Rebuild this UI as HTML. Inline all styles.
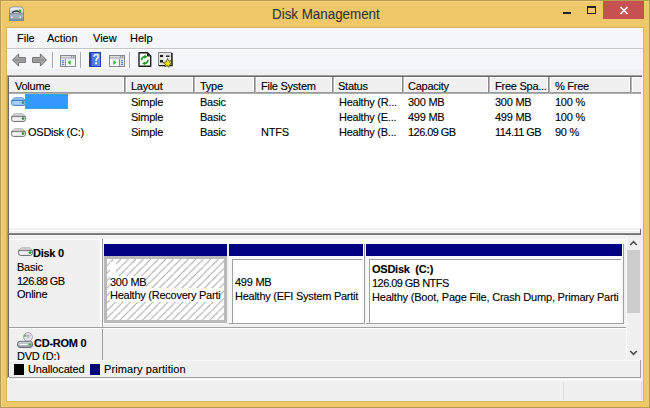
<!DOCTYPE html>
<html><head><meta charset="utf-8">
<style>
*{margin:0;padding:0;box-sizing:border-box}
html,body{width:650px;height:408px;overflow:hidden;background:#EFC86A}
body{position:relative;font-family:"Liberation Sans",sans-serif;font-size:11px;color:#000}
.a{position:absolute}
.t{position:absolute;white-space:nowrap;line-height:15px;font-size:11px;-webkit-text-stroke:0.12px #000;letter-spacing:-0.25px}
.b{font-weight:bold}
svg{position:absolute;overflow:visible}
</style></head><body>
<!-- outer frame -->
<div class="a" style="left:0;top:0;width:650px;height:408px;border:1px solid #B79B55"></div>
<div class="a" style="left:1px;top:1px;width:648px;height:406px;border:1px solid #F5D27C;border-right-color:#F0C96C;border-bottom-color:#F0C96C"></div>
<!-- title icon -->
<svg style="left:9px;top:6px" width="15" height="15" viewBox="0 0 15 15">
<defs><linearGradient id="tg" x1="0" y1="0" x2="0" y2="1"><stop offset="0" stop-color="#F4F6F8"/><stop offset="1" stop-color="#C2C8D0"/></linearGradient>
<linearGradient id="tb" x1="0" y1="0" x2="0" y2="1"><stop offset="0" stop-color="#B4C0CA"/><stop offset="1" stop-color="#7E8E9C"/></linearGradient></defs>
<path d="M0.5 8 V4 Q0.5 0.8 4 0.8 H11 Q14.5 0.8 14.5 4 V8 Z" fill="url(#tg)" stroke="#8C949C"/>
<path d="M3 6.5 Q7.5 3.5 11.5 6.5" stroke="#2A2A2A" stroke-width="1.3" fill="none"/>
<rect x="10" y="3.5" width="2.2" height="2.6" fill="#36B236"/>
<rect x="0.5" y="7.8" width="14" height="6.7" fill="url(#tb)" stroke="#7A8894"/>
<rect x="2" y="10.5" width="1.6" height="1.6" fill="#F0F0F0"/><rect x="10.5" y="10.5" width="1.6" height="1.6" fill="#F0F0F0"/>
<rect x="4" y="11" width="6" height="1" fill="#A8B4BE"/>
</svg>
<div class="a" style="left:271.5px;top:3.7px;font-size:14px;line-height:20px;color:#333;white-space:nowrap;-webkit-text-stroke:0.1px #333;transform:scaleX(0.955);transform-origin:0 0">Disk Management</div>
<!-- caption buttons -->
<div class="a" style="left:563px;top:12px;width:8px;height:2px;background:#222"></div>
<div class="a" style="left:587px;top:6px;width:9px;height:8px;border:1px solid #222;border-top-width:2px"></div>
<div class="a" style="left:603px;top:1px;width:41px;height:18px;background:#C75050"></div>
<svg style="left:619px;top:6px" width="10" height="9" viewBox="0 0 10 9"><path d="M1.5 1 L8.5 8 M8.5 1 L1.5 8" stroke="#fff" stroke-width="1.6"/></svg>
<!-- client border -->
<div class="a" style="left:6px;top:27px;width:638px;height:375px;border:1px solid #D9B45E"></div>
<!-- client bg -->
<div class="a" style="left:7px;top:28px;width:636px;height:373px;background:#F0F0F0"></div>
<!-- menubar -->
<div class="a" style="left:7px;top:28px;width:636px;height:20px;background:#F5F6F7"></div>
<div class="t" style="left:17px;top:31px;letter-spacing:0">File</div>
<div class="t" style="left:47px;top:31px;letter-spacing:0">Action</div>
<div class="t" style="left:93px;top:31px;letter-spacing:0">View</div>
<div class="t" style="left:130px;top:31px;letter-spacing:0">Help</div>
<div class="a" style="left:7px;top:48px;width:636px;height:1px;background:#C6C6C6"></div>
<div class="a" style="left:7px;top:49px;width:636px;height:1px;background:#FFFFFF"></div>
<!-- toolbar -->
<div class="a" style="left:7px;top:50px;width:636px;height:19px;background:#F5F6F7"></div>
<!-- back arrow -->
<svg style="left:12px;top:53px" width="15" height="15" viewBox="0 0 15 15">
<defs><linearGradient id="ag" x1="0" y1="0" x2="0" y2="1"><stop offset="0" stop-color="#C4C4C4"/><stop offset="0.5" stop-color="#8E8E8E"/><stop offset="1" stop-color="#B8B8B8"/></linearGradient></defs>
<path d="M0.6 7 L6.6 0.9 V4.6 H13.4 V9.4 H6.6 V13.1 Z" fill="url(#ag)" stroke="#6E6E6E" stroke-linejoin="round"/>
<path d="M2.2 7 L5.6 3.5 V5.6 H12.4 V8.4 H5.6 V10.5 Z" fill="none" stroke="#C8C8C8" stroke-width="0.6" opacity="0.7"/>
</svg>
<svg style="left:32px;top:53px" width="15" height="15" viewBox="0 0 15 15">
<path d="M14.4 7 L8.4 0.9 V4.6 H0.6 V9.4 H8.4 V13.1 Z" fill="url(#ag)" stroke="#6E6E6E" stroke-linejoin="round"/>
<path d="M12.8 7 L9.4 3.5 V5.6 H1.6 V8.4 H9.4 V10.5 Z" fill="none" stroke="#C8C8C8" stroke-width="0.6" opacity="0.7"/>
</svg>
<div class="a" style="left:52px;top:52px;width:1px;height:16px;background:#A8A8A8"></div>
<div class="a" style="left:53px;top:52px;width:1px;height:16px;background:#FFFFFF"></div>
<!-- console tree icon -->
<svg style="left:60px;top:55px" width="16" height="12" viewBox="0 0 16 12">
<rect x="0.5" y="0.5" width="15" height="11" fill="#FAFAFA" stroke="#868B92"/>
<rect x="1" y="1" width="14" height="1.6" fill="#D9DDE2"/>
<rect x="11" y="1.2" width="1.2" height="1.2" fill="#868B92"/><rect x="13" y="1.2" width="1.2" height="1.2" fill="#868B92"/>
<rect x="1" y="2.6" width="14" height="1" fill="#868B92"/>
<rect x="1" y="3.6" width="14" height="0.9" fill="#DCDFE3"/>
<rect x="1" y="4.5" width="4" height="6.5" fill="#E9EDF2"/>
<rect x="5" y="4.2" width="1" height="7" fill="#868B92"/>
<ellipse cx="3" cy="5.7" rx="1.3" ry="0.7" fill="#4F86D6"/><ellipse cx="3" cy="7.6" rx="1.3" ry="0.7" fill="#4F86D6"/><ellipse cx="3" cy="9.5" rx="1.3" ry="0.7" fill="#4F86D6"/>
<path d="M10.6 5 L7.6 7.5 L10.6 10 Z" fill="#2DB52D"/>
</svg>
<div class="a" style="left:80px;top:52px;width:1px;height:16px;background:#A8A8A8"></div>
<div class="a" style="left:81px;top:52px;width:1px;height:16px;background:#FFFFFF"></div>
<!-- help icon -->
<svg style="left:89px;top:52px" width="12" height="15" viewBox="0 0 12 15">
<defs><linearGradient id="hg" x1="0" y1="0" x2="1" y2="0"><stop offset="0" stop-color="#3F63D0"/><stop offset="1" stop-color="#7196E6"/></linearGradient></defs>
<rect x="0" y="0" width="12" height="15" fill="url(#hg)"/>
<rect x="0" y="0" width="2.5" height="15" fill="#1F37A8"/>
<rect x="0.5" y="0.5" width="11" height="14" fill="none" stroke="#2540B0"/>
<path d="M5.1 4.7 Q5.2 2.6 7.3 2.6 Q9.3 2.6 9.3 4.6 Q9.3 5.9 7.8 6.9 Q7.1 7.4 7.1 8.9" stroke="#fff" stroke-width="1.5" fill="none"/>
<rect x="6.2" y="10.3" width="1.8" height="1.9" fill="#fff"/>
<rect x="2.5" y="1" width="0.8" height="13" fill="#5E80D8" opacity="0.6"/>
</svg>
<!-- action pane icon -->
<svg style="left:109px;top:55px" width="16" height="12" viewBox="0 0 16 12">
<rect x="0.5" y="0.5" width="15" height="11" fill="#FAFAFA" stroke="#868B92"/>
<rect x="1" y="1" width="14" height="1.6" fill="#D9DDE2"/>
<rect x="11" y="1.2" width="1.2" height="1.2" fill="#868B92"/><rect x="13" y="1.2" width="1.2" height="1.2" fill="#868B92"/>
<rect x="1" y="2.6" width="14" height="1" fill="#868B92"/>
<rect x="1" y="3.6" width="14" height="0.9" fill="#DCDFE3"/>
<rect x="11" y="4.5" width="4" height="6.5" fill="#E9EDF2"/>
<rect x="10" y="4.2" width="1" height="7" fill="#868B92"/>
<ellipse cx="13" cy="5.7" rx="1.3" ry="0.7" fill="#4F86D6"/><ellipse cx="13" cy="7.6" rx="1.3" ry="0.7" fill="#4F86D6"/><ellipse cx="13" cy="9.5" rx="1.3" ry="0.7" fill="#4F86D6"/>
<path d="M4.4 5 L7.4 7.5 L4.4 10 Z" fill="#2DB52D"/>
</svg>
<div class="a" style="left:129px;top:52px;width:1px;height:16px;background:#A8A8A8"></div>
<div class="a" style="left:130px;top:52px;width:1px;height:16px;background:#FFFFFF"></div>
<!-- refresh icon -->
<svg style="left:137.5px;top:52px" width="14" height="16" viewBox="0 0 14 16">
<path d="M1 0.8 H9.5 L12.7 4 V14.2 H1 Z" fill="#FFFFFF" stroke="#1E1E1E" stroke-width="1.4" stroke-linejoin="round"/>
<path d="M9.5 1 V4 H12.5" fill="#333" stroke="#1E1E1E" stroke-width="1"/>
<path d="M3.6 8.2 Q3.6 5 7 4.6" stroke="#1F9A1F" stroke-width="1.6" fill="none"/>
<path d="M6.4 2.8 L9.6 4.8 L6.4 6.8 Z" fill="#1F9A1F"/>
<path d="M10 7.8 Q10 11 6.6 11.4" stroke="#1F9A1F" stroke-width="1.6" fill="none"/>
<path d="M7.2 9.4 L4 11.4 L7.2 13.2 Z" fill="#1F9A1F"/>
</svg>
<!-- properties icon -->
<svg style="left:158px;top:52px" width="16" height="16" viewBox="0 0 16 16">
<rect x="0.5" y="0.5" width="13" height="13" fill="#E4E4E4" stroke="#8A8A8A"/>
<path d="M1 13.6 H14 V1" stroke="#1A1A1A" stroke-width="1.4" fill="none"/>
<rect x="2" y="3" width="3" height="2" fill="#1A1A1A"/><rect x="8" y="3.5" width="3.5" height="1.4" fill="#1A1A1A"/>
<rect x="2" y="8" width="3" height="2.5" fill="#1A1A1A"/>
<rect x="6" y="5.5" width="5" height="2" fill="#FFFFFF"/>
<path d="M9.5 6.2 L10.6 9 L13.6 8.4 L11.8 10.8 L14.4 12.8 L11.4 12.8 L10.8 15.4 L9.2 13.4 L6.8 15 L7.4 12.2 L5 10.6 L8.2 10 Z" fill="#E6E21A" stroke="#4A4A00" stroke-width="0.7"/>
</svg>
<!-- list view -->
<div class="a" style="left:7px;top:75px;width:635px;height:1px;background:#A0A0A0"></div>
<div class="a" style="left:7px;top:75px;width:1px;height:159px;background:#A0A0A0"></div>
<div class="a" style="left:8px;top:76px;width:634px;height:1px;background:#696969"></div>
<div class="a" style="left:8px;top:76px;width:1px;height:157px;background:#696969"></div>
<div class="a" style="left:9px;top:77px;width:633px;height:151px;background:#FFFFFF"></div><div class="a" style="left:641px;top:77px;width:2px;height:151px;background:#F6F6F6"></div>
<!-- header -->
<div class="a" style="left:9px;top:78px;width:632px;height:14px;background:#F0F0F0"></div>
<div class="a" style="left:9px;top:92px;width:632px;height:1px;background:#9A9A9A"></div><div class="a" style="left:9px;top:93px;width:632px;height:1px;background:#ACACAC"></div>
<div class="a" style="left:123px;top:78px;width:1px;height:14px;background:#fff"></div><div class="a" style="left:124px;top:77px;width:1px;height:16px;background:#8A8A8A"></div><div class="a" style="left:125px;top:77px;width:1px;height:16px;background:#B4B4B4"></div><div class="a" style="left:126px;top:78px;width:1px;height:14px;background:#fff"></div>
<div class="a" style="left:192px;top:78px;width:1px;height:14px;background:#fff"></div><div class="a" style="left:193px;top:77px;width:1px;height:16px;background:#8A8A8A"></div><div class="a" style="left:194px;top:77px;width:1px;height:16px;background:#B4B4B4"></div><div class="a" style="left:195px;top:78px;width:1px;height:14px;background:#fff"></div>
<div class="a" style="left:253px;top:78px;width:1px;height:14px;background:#fff"></div><div class="a" style="left:254px;top:77px;width:1px;height:16px;background:#8A8A8A"></div><div class="a" style="left:255px;top:77px;width:1px;height:16px;background:#B4B4B4"></div><div class="a" style="left:256px;top:78px;width:1px;height:14px;background:#fff"></div>
<div class="a" style="left:331px;top:78px;width:1px;height:14px;background:#fff"></div><div class="a" style="left:332px;top:77px;width:1px;height:16px;background:#8A8A8A"></div><div class="a" style="left:333px;top:77px;width:1px;height:16px;background:#B4B4B4"></div><div class="a" style="left:334px;top:78px;width:1px;height:14px;background:#fff"></div>
<div class="a" style="left:401px;top:78px;width:1px;height:14px;background:#fff"></div><div class="a" style="left:402px;top:77px;width:1px;height:16px;background:#8A8A8A"></div><div class="a" style="left:403px;top:77px;width:1px;height:16px;background:#B4B4B4"></div><div class="a" style="left:404px;top:78px;width:1px;height:14px;background:#fff"></div>
<div class="a" style="left:487px;top:78px;width:1px;height:14px;background:#fff"></div><div class="a" style="left:488px;top:77px;width:1px;height:16px;background:#8A8A8A"></div><div class="a" style="left:489px;top:77px;width:1px;height:16px;background:#B4B4B4"></div><div class="a" style="left:490px;top:78px;width:1px;height:14px;background:#fff"></div>
<div class="a" style="left:547px;top:78px;width:1px;height:14px;background:#fff"></div><div class="a" style="left:548px;top:77px;width:1px;height:16px;background:#8A8A8A"></div><div class="a" style="left:549px;top:77px;width:1px;height:16px;background:#B4B4B4"></div><div class="a" style="left:550px;top:78px;width:1px;height:14px;background:#fff"></div>
<div class="a" style="left:629px;top:78px;width:1px;height:14px;background:#fff"></div><div class="a" style="left:630px;top:77px;width:1px;height:16px;background:#8A8A8A"></div><div class="a" style="left:631px;top:77px;width:1px;height:16px;background:#B4B4B4"></div><div class="a" style="left:632px;top:78px;width:1px;height:14px;background:#fff"></div>
<div class="t" style="left:15px;top:78.5px">Volume</div>
<div class="t" style="left:131px;top:78.5px">Layout</div>
<div class="t" style="left:200px;top:78.5px">Type</div>
<div class="t" style="left:261px;top:78.5px">File System</div>
<div class="t" style="left:338px;top:78.5px">Status</div>
<div class="t" style="left:408px;top:78.5px">Capacity</div>
<div class="t" style="left:495px;top:78.5px">Free Spa...</div>
<div class="t" style="left:555px;top:78.5px">% Free</div>
<!-- rows -->
<svg id="dk" style="left:11px;top:97px" width="15" height="10" viewBox="0 0 15 10">
<path d="M1 3.6 Q1.6 1 4 0.6 H11 Q13.4 1 14 3.6 Z" fill="#8FBDEB" stroke="#6FA2D8" stroke-width="0.8"/>
<path d="M0.7 3.4 H14.3 V6.6 Q14.3 8.4 12.4 8.4 H2.6 Q0.7 8.4 0.7 6.6 Z" fill="#A8CEF4" stroke="#3F78C0" stroke-width="1"/>
<circle cx="12" cy="5.6" r="1.35" fill="#2E8E6E"/>
</svg>
<div class="a" style="left:25px;top:94px;width:43px;height:15px;background:#3399FF;border:1px dotted #C38A3E"></div>
<svg style="left:11px;top:113px" width="15" height="10" viewBox="0 0 15 10">
<path d="M1 3.6 Q1.6 1 4 0.6 H11 Q13.4 1 14 3.6 Z" fill="#D2D2D2" stroke="#B4B4B4" stroke-width="0.8"/>
<path d="M0.7 3.4 H14.3 V6.6 Q14.3 8.4 12.4 8.4 H2.6 Q0.7 8.4 0.7 6.6 Z" fill="#F2F2F8" stroke="#6A6A6A" stroke-width="1"/>
<path d="M2 4.3 H11" stroke="#DCDCE8" stroke-width="0.8"/>
<circle cx="12" cy="5.6" r="1.35" fill="#17A017"/>
</svg>
<svg style="left:11px;top:128px" width="15" height="10" viewBox="0 0 15 10">
<path d="M1 3.6 Q1.6 1 4 0.6 H11 Q13.4 1 14 3.6 Z" fill="#D2D2D2" stroke="#B4B4B4" stroke-width="0.8"/>
<path d="M0.7 3.4 H14.3 V6.6 Q14.3 8.4 12.4 8.4 H2.6 Q0.7 8.4 0.7 6.6 Z" fill="#F2F2F8" stroke="#6A6A6A" stroke-width="1"/>
<path d="M2 4.3 H11" stroke="#DCDCE8" stroke-width="0.8"/>
<circle cx="12" cy="5.6" r="1.35" fill="#17A017"/>
</svg>
<div class="t" style="left:131px;top:94.5px">Simple</div>
<div class="t" style="left:200px;top:94.5px">Basic</div>
<div class="t" style="left:339px;top:94.5px">Healthy (R...</div>
<div class="t" style="left:408px;top:94.5px">300 MB</div>
<div class="t" style="left:495px;top:94.5px">300 MB</div>
<div class="t" style="left:555px;top:94.5px">100 %</div>

<div class="t" style="left:131px;top:109.7px">Simple</div>
<div class="t" style="left:200px;top:109.7px">Basic</div>
<div class="t" style="left:339px;top:109.7px">Healthy (E...</div>
<div class="t" style="left:408px;top:109.7px">499 MB</div>
<div class="t" style="left:495px;top:109.7px">499 MB</div>
<div class="t" style="left:555px;top:109.7px">100 %</div>

<div class="t" style="left:28px;top:125px">OSDisk (C:)</div>
<div class="t" style="left:131px;top:125px">Simple</div>
<div class="t" style="left:200px;top:125px">Basic</div>
<div class="t" style="left:261px;top:125px">NTFS</div>
<div class="t" style="left:339px;top:125px">Healthy (B...</div>
<div class="t" style="left:408px;top:125px;letter-spacing:-0.55px">126.09 GB</div>
<div class="t" style="left:495px;top:125px;letter-spacing:-0.55px">114.11 GB</div>
<div class="t" style="left:555px;top:125px">90 %</div>
<!-- splitter -->
<div class="a" style="left:9px;top:230px;width:631px;height:1px;background:#FFFFFF"></div>
<div class="a" style="left:7px;top:233px;width:634px;height:1px;background:#8A8A8A"></div>
<div class="a" style="left:7px;top:234px;width:634px;height:1px;background:#6E6E6E"></div>
<div class="a" style="left:640px;top:229px;width:1px;height:6px;background:#6E6E6E"></div>
<div class="a" style="left:9px;top:235px;width:616px;height:1px;background:#FAFAFA"></div>
<!-- lower pane -->
<div class="a" style="left:7px;top:234px;width:1px;height:144px;background:#A0A0A0"></div>
<div class="a" style="left:8px;top:234px;width:1px;height:143px;background:#696969"></div>
<!-- disk 0 row -->
<div class="a" style="left:9px;top:239px;width:92px;height:1px;background:#FFFFFF"></div>
<div class="a" style="left:100px;top:239px;width:2px;height:88px;background:#FFFFFF"></div>
<div class="a" style="left:102px;top:239px;width:1px;height:121px;background:#A0A0A0"></div>
<div class="a" style="left:103px;top:239px;width:522px;height:5px;background:#F8F8F8;border-top:1px solid #fff"></div>
<svg style="left:18px;top:247px" width="15" height="10" viewBox="0 0 15 10">
<path d="M1 3.6 Q1.6 1 4 0.6 H11 Q13.4 1 14 3.6 Z" fill="#D2D2D2" stroke="#B4B4B4" stroke-width="0.8"/>
<path d="M0.7 3.4 H14.3 V6.6 Q14.3 8.4 12.4 8.4 H2.6 Q0.7 8.4 0.7 6.6 Z" fill="#F2F2F8" stroke="#6A6A6A" stroke-width="1"/>
<path d="M2 4.3 H11" stroke="#DCDCE8" stroke-width="0.8"/>
<circle cx="12" cy="5.6" r="1.35" fill="#17A017"/>
</svg>
<div class="t b" style="left:33px;top:246px">Disk 0</div>
<div class="t" style="left:17px;top:259.7px">Basic</div>
<div class="t" style="left:17px;top:273.7px;letter-spacing:-0.55px">126.88 GB</div>
<div class="t" style="left:17px;top:287px">Online</div>
<!-- partition 1 (selected) -->
<div class="a" style="left:104px;top:244px;width:123px;height:12px;background:#000080"></div>
<div class="a" style="left:104px;top:256px;width:123px;height:67px;background:#B9B9B9"></div>
<svg style="left:107px;top:259px" width="117" height="61">
<defs><pattern id="h" patternUnits="userSpaceOnUse" width="7.5" height="7.5" x="6.5" y="0">
<path d="M-1 8.5 L8.5 -1" stroke="#A2A2A2" stroke-width="0.95"/>
</pattern></defs>
<rect width="117" height="61" fill="#fff"/>
<rect width="117" height="61" fill="url(#h)"/>
</svg>
<div class="a" style="left:107px;top:259px;width:117px;height:61px;overflow:hidden">
<div class="a" style="left:3px;top:3px;width:6px;height:14px;background:#fff"></div>
<div class="t" style="left:3px;top:17px;line-height:13px;background:#fff">300 MB</div>
<div class="t" style="left:3px;top:29px;line-height:14px;background:#fff">Healthy (Recovery Parti</div>
</div>
<div class="a" style="left:103px;top:323px;width:123px;height:1px;background:#FFFFFF"></div>
<!-- partition 2 -->
<div class="a" style="left:229px;top:244px;width:136px;height:80px;background:#F8F8F8;border-right:1px solid #A0A0A0;border-bottom:1px solid #A0A0A0"></div>
<div class="a" style="left:229px;top:244px;width:134px;height:12px;background:#000080"></div>
<div class="a" style="left:232px;top:259px;width:130px;height:64px;background:#FFFFFF;border-left:1px solid #A0A0A0;border-top:1px solid #A0A0A0;overflow:hidden">
<div class="t" style="left:2px;top:14.8px">499 MB</div>
<div class="t" style="left:2px;top:28.8px">Healthy (EFI System Partit</div>
</div>
<!-- partition 3 -->
<div class="a" style="left:366px;top:244px;width:258px;height:80px;background:#F8F8F8;border-right:1px solid #A0A0A0;border-bottom:1px solid #A0A0A0"></div>
<div class="a" style="left:366px;top:244px;width:256px;height:12px;background:#000080"></div>
<div class="a" style="left:369px;top:259px;width:252px;height:64px;background:#FFFFFF;border-left:1px solid #A0A0A0;border-top:1px solid #A0A0A0;overflow:hidden">
<div class="t b" style="left:2px;top:2px">OSDisk&nbsp; (C:)</div>
<div class="t" style="left:2px;top:15.8px;letter-spacing:-0.55px">126.09 GB NTFS</div>
<div class="t" style="left:2px;top:29.8px;letter-spacing:-0.2px">Healthy (Boot, Page File, Crash Dump, Primary Parti</div>
</div>
<!-- row separator -->
<div class="a" style="left:9px;top:327px;width:617px;height:1px;background:#A0A0A0"></div>
<div class="a" style="left:9px;top:328px;width:617px;height:1px;background:#FFFFFF"></div>
<!-- cd-rom row -->
<svg style="left:17px;top:332px" width="17" height="16" viewBox="0 0 17 16">
<defs><linearGradient id="cb" x1="0" y1="0" x2="0" y2="1"><stop offset="0" stop-color="#D6DADE"/><stop offset="1" stop-color="#8E9398"/></linearGradient></defs>
<circle cx="11" cy="5" r="4.4" fill="#ECE6F0" stroke="#A8A4B0"/>
<path d="M8 2.5 Q11 4 13.5 3" stroke="#C9A8D8" stroke-width="1.2" fill="none"/>
<circle cx="11" cy="5" r="1.1" fill="#fff" stroke="#9A9A9A" stroke-width="0.8"/>
<rect x="6.8" y="2.8" width="2" height="2" fill="#48C048"/>
<path d="M3 9.3 H13.5 Q15.5 9.3 15.5 11.8 V13 Q15.5 15.5 13 15.5 H3 Q0.5 15.5 0.5 13 V11.8 Q0.5 9.3 3 9.3 Z" fill="url(#cb)" stroke="#6E7276"/>
<rect x="2.5" y="12" width="8" height="1.2" fill="#F2F2F2"/>
<rect x="12.3" y="11.3" width="2" height="2.2" fill="#2BAA2B"/>
</svg>
<div class="t b" style="left:34px;top:335.8px">CD-ROM 0</div>
<div class="t" style="left:17px;top:349px">DVD (D:)</div>
<!-- scrollbar -->
<div class="a" style="left:626px;top:236px;width:1px;height:124px;background:#FAFAFA"></div>
<svg style="left:629px;top:240px" width="9" height="6" viewBox="0 0 9 6"><path d="M1.2 5 L4.5 1.7 L7.8 5" stroke="#505050" stroke-width="1.7" fill="none"/></svg>
<div class="a" style="left:627px;top:250px;width:13px;height:63px;background:#CDCDCD"></div>
<svg style="left:629px;top:350px" width="9" height="6" viewBox="0 0 9 6"><path d="M1.2 1 L4.5 4.3 L7.8 1" stroke="#505050" stroke-width="1.7" fill="none"/></svg>
<!-- legend -->
<div class="a" style="left:9px;top:360px;width:632px;height:17px;background:#F0F0F0;border-top:1px solid #FAFAFA"></div>
<div class="a" style="left:14px;top:363.5px;width:10px;height:11px;background:#000"></div>
<div class="t" style="left:28px;top:362px;letter-spacing:-0.15px">Unallocated</div>
<div class="a" style="left:90px;top:363.5px;width:10px;height:11px;background:#000080"></div>
<div class="t" style="left:104px;top:362px;letter-spacing:0.1px">Primary partition</div>
<div class="a" style="left:9px;top:377px;width:632px;height:1px;background:#A0A0A0"></div>
<div class="a" style="left:640px;top:360px;width:1px;height:18px;background:#A0A0A0"></div>
<!-- status bar -->
<div class="a" style="left:7px;top:379px;width:636px;height:1px;background:#FFFFFF"></div>
<div class="a" style="left:563px;top:382px;width:1px;height:18px;background:#DCDCDC"></div>
<div class="a" style="left:641px;top:382px;width:1px;height:18px;background:#DCDCDC"></div>
</body></html>
